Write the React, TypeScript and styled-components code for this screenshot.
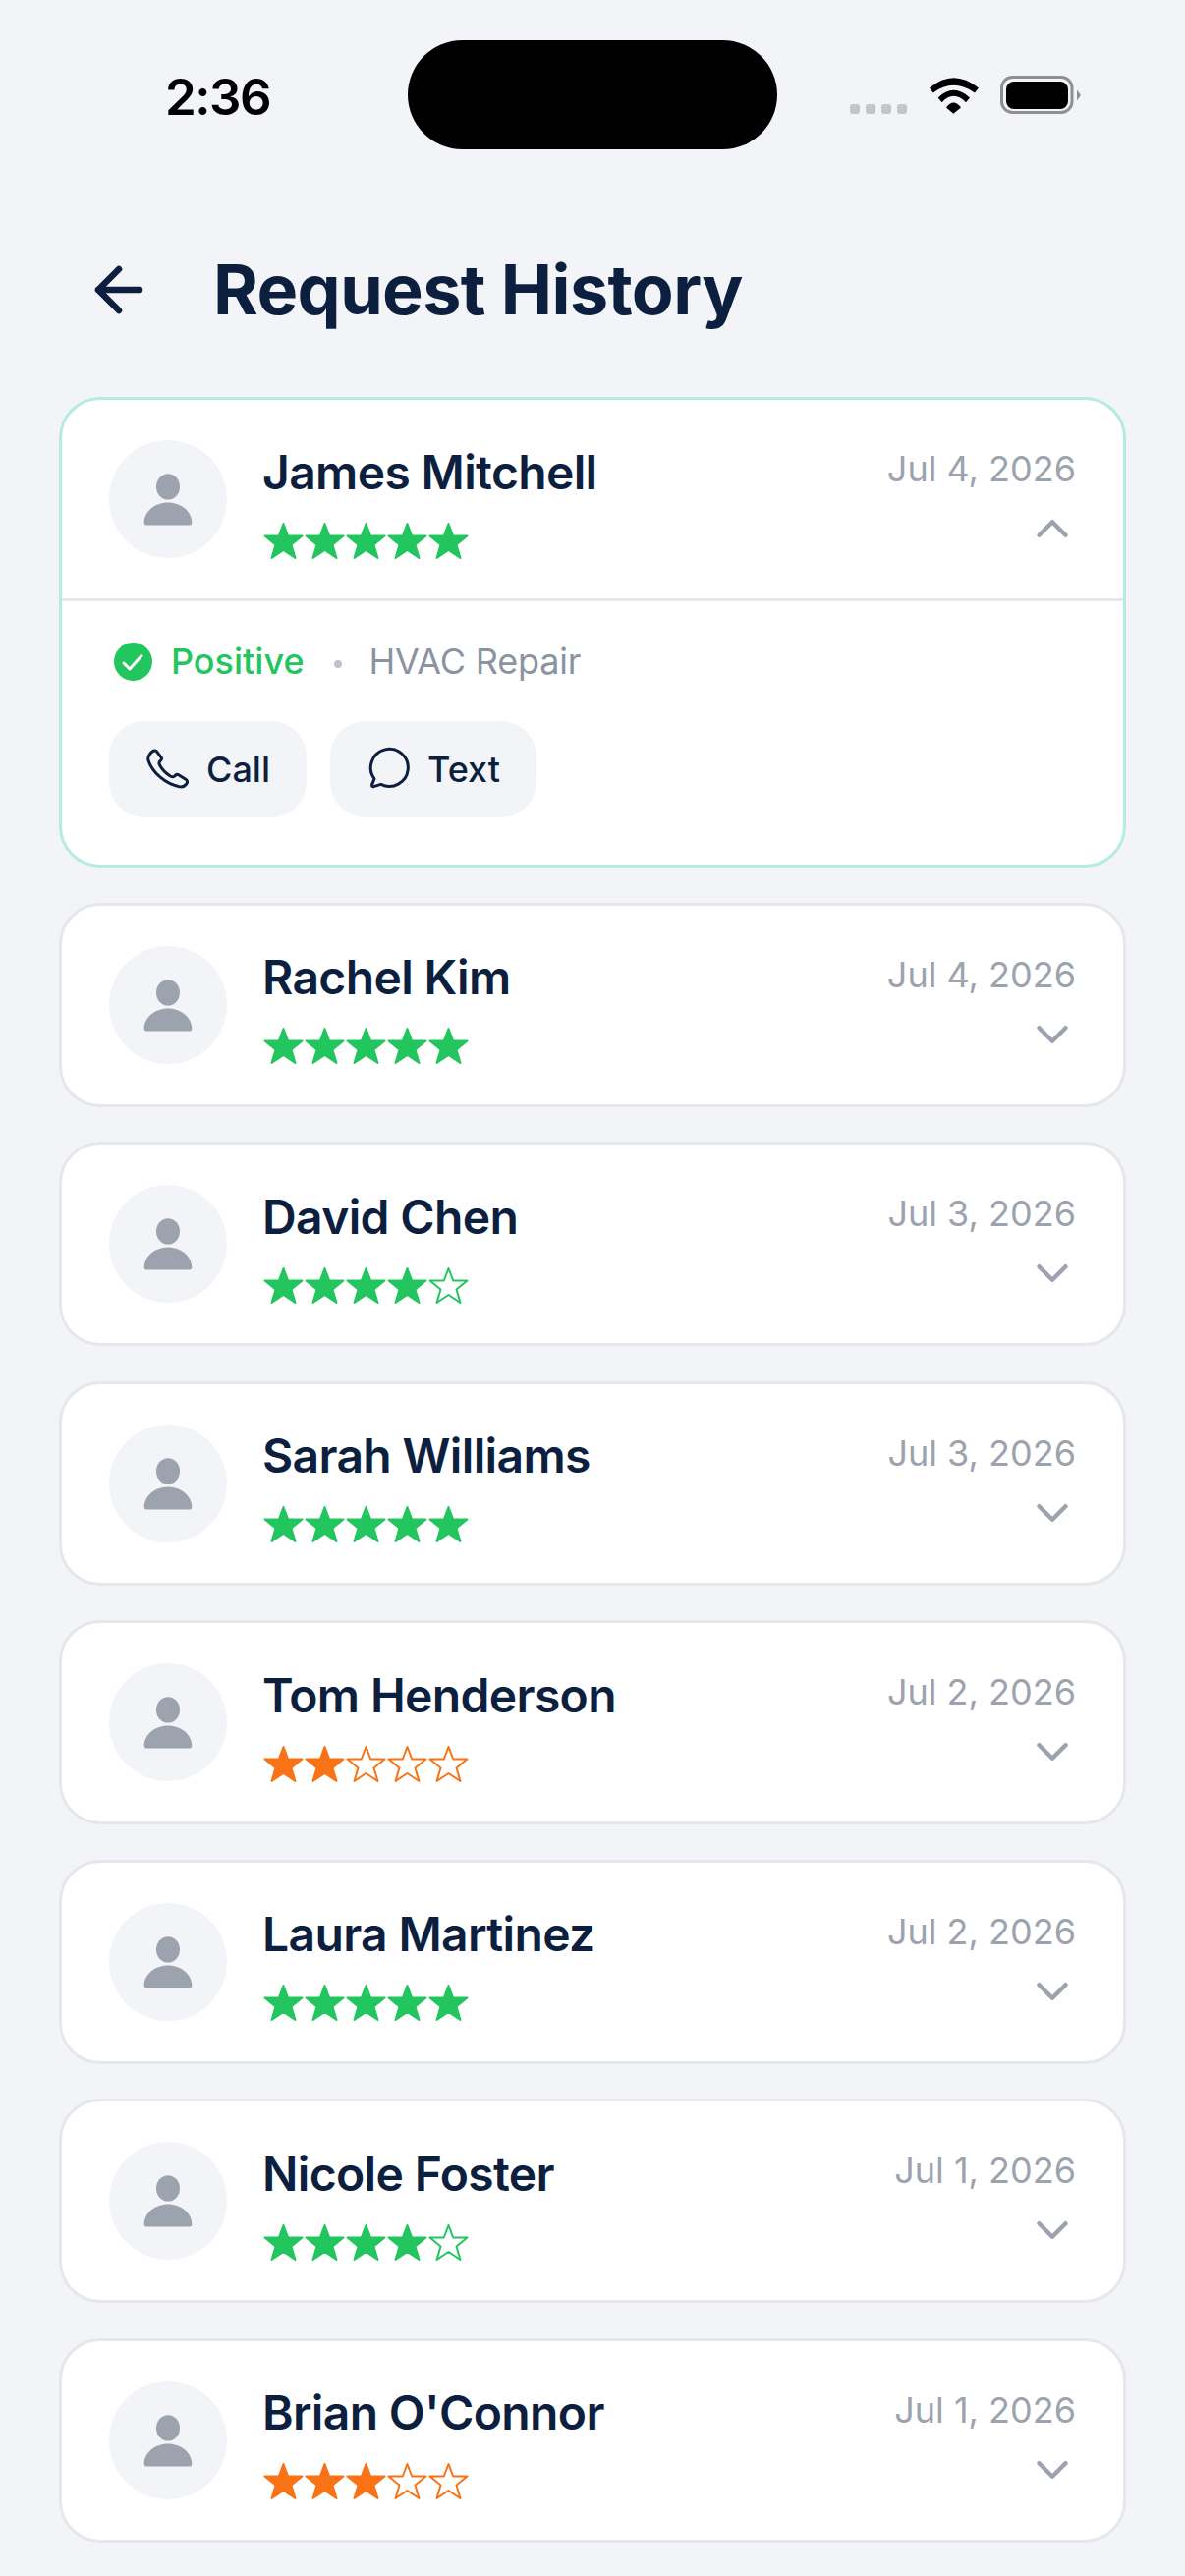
import React from "react";
import styled, { createGlobalStyle } from "styled-components";

const Global = createGlobalStyle`
  html, body { margin: 0; padding: 0; background: #f3f4f8; }
  body { font-family: Inter, "Liberation Sans", sans-serif; color: #0f1f3d; }
`;

const Page = styled.div`
  width: 1206px;
  height: 2622px;
  background: #f3f4f8;
  overflow: hidden;
`;

const StatusBar = styled.div`
  height: 152px;
  padding-top: 41px;
  box-sizing: border-box;
  display: grid;
  grid-template-columns: 415px 376px 1fr;
`;

const Time = styled.div`
  padding: 32px 0 0 168px;
  font-size: 51px;
  line-height: 52px;
  font-weight: 600;
  letter-spacing: -1.5px;
  color: #000;
`;

const Island = styled.div`
  height: 111px;
  border-radius: 56px;
  background: #000;
`;

const StatusIcons = styled.div`
  display: flex;
  align-items: flex-start;
  padding: 36px 0 0 74px;
`;

const Dots = styled.div`
  display: flex;
  gap: 6px;
  margin-top: 29px;
  width: 81px;
`;

const Dot = styled.span`
  width: 10px;
  height: 10px;
  border-radius: 3px;
  background: #c4c5c8;
`;

const WifiIcon = styled.svg`
  margin-top: 2px;
`;

const BatteryIcon = styled.svg`
  margin-left: 22px;
`;

const Header = styled.div`
  display: flex;
  align-items: center;
  height: 100px;
  margin-top: 93px;
  padding-left: 85px;
  gap: 60px;
`;

const Title = styled.h1`
  margin: 0;
  font-size: 70px;
  line-height: 84px;
  font-weight: 700;
  letter-spacing: -0.6px;
  color: #0d1f3f;
`;

const List = styled.div`
  display: flex;
  flex-direction: column;
  gap: 35.5px;
  margin-top: 59px;
  padding: 0 60px;
`;

const Card = styled.div<{ $open?: boolean }>`
  background: #fff;
  border: 3px solid ${(p) => (p.$open ? "#b5ece2" : "#e5e7eb")};
  border-radius: 42px;
  overflow: hidden;
`;

const Row = styled.div`
  display: flex;
  align-items: center;
  height: 202px;
  padding: 0 48px;
`;

const Avatar = styled.div`
  width: 120px;
  height: 120px;
  border-radius: 50%;
  background: #f3f4f8;
  display: flex;
  align-items: center;
  justify-content: center;
  flex: none;
`;

const Info = styled.div`
  margin-left: 36px;
  padding-top: 6px;
  flex: 1;
  display: flex;
  flex-direction: column;
  gap: 21px;
`;

const Name = styled.div`
  font-size: 48px;
  line-height: 58px;
  font-weight: 600;
  letter-spacing: -0.65px;
  color: #0d1f3f;
`;

const Stars = styled.div`
  display: flex;
  margin-left: 1px;
`;

const StarIcon = styled.svg`
  display: block;
`;

const Side = styled.div`
  display: flex;
  flex-direction: column;
  align-items: flex-end;
  gap: 12px;
  padding-top: 4px;
`;

const DateText = styled.div`
  font-size: 36px;
  line-height: 44px;
  color: #9ca3af;
`;

const ChevronWrap = styled.div`
  width: 54px;
  height: 54px;
  margin-right: -3px;
`;

const Details = styled.div`
  border-top: 3px solid #e5e7eb;
  padding: 36px 48px 48px;
`;

const Meta = styled.div`
  display: flex;
  align-items: center;
  height: 50px;
`;

const CheckIcon = styled.svg`
  margin-left: 5px;
`;

const Positive = styled.span`
  margin-left: 19px;
  font-size: 36px;
  font-weight: 500;
  color: #22c55e;
`;

const Sep = styled.span`
  width: 8px;
  height: 8px;
  border-radius: 50%;
  background: #bcc1ca;
  margin: 6px 28px 0 30px;
`;

const Service = styled.span`
  font-size: 36px;
  letter-spacing: -0.2px;
  color: #8b93a3;
`;

const Actions = styled.div`
  display: flex;
  gap: 24px;
  margin-top: 36px;
`;

const ActionButton = styled.div`
  display: flex;
  align-items: center;
  gap: 15px;
  height: 98px;
  padding: 0 37px 0 36px;
  border-radius: 36px;
  background: #f3f4f8;
  font-size: 36px;
  font-weight: 500;
  color: #0d1f3f;
`;

const Person = () => (
  <svg width="72" height="72" viewBox="0 0 24 24" fill="#9ca3af">
    <ellipse cx="12" cy="7.8" rx="4" ry="4.4" />
    <path d="M3.900 20.100c0-3.800 3.600-6.900 8.100-6.900s8.100 3.100 8.100 6.900c0 .4-.3.7-.7.7H4.600c-.4 0-.7-.3-.7-.7z" />
  </svg>
);

const STAR = "M19.500 1L24.200 13.500H38.500L27.500 22.500L31.500 36L19.500 28L7.500 36L11.500 22.500L.5 13.500H14.800z";

const Star = ({ filled, color }: { filled: boolean; color: string }) => (
  <StarIcon width="42" height="40" viewBox="-1 -1 42 40">
    <path d={STAR} fill={filled ? color : "none"} stroke={color} strokeWidth="2" strokeLinejoin="round" />
  </StarIcon>
);

const Rating = ({ value }: { value: number }) => {
  const color = value >= 4 ? "#22c55e" : "#f97316";
  return (
    <Stars>
      {[1, 2, 3, 4, 5].map((n) => (
        <Star key={n} filled={n <= value} color={color} />
      ))}
    </Stars>
  );
};

const Chevron = ({ up }: { up?: boolean }) => (
  <ChevronWrap>
    <svg width="54" height="54" viewBox="0 0 24 24" fill="none" stroke="#9ca3af" strokeWidth="2" strokeLinecap="round" strokeLinejoin="round">
      <path d={up ? "M6 15l6-6 6 6" : "M6 9l6 6 6-6"} />
    </svg>
  </ChevronWrap>
);

const people = [
  { name: "James Mitchell", date: "Jul 4, 2026", rating: 5, open: true },
  { name: "Rachel Kim", date: "Jul 4, 2026", rating: 5 },
  { name: "David Chen", date: "Jul 3, 2026", rating: 4 },
  { name: "Sarah Williams", date: "Jul 3, 2026", rating: 5 },
  { name: "Tom Henderson", date: "Jul 2, 2026", rating: 2 },
  { name: "Laura Martinez", date: "Jul 2, 2026", rating: 5 },
  { name: "Nicole Foster", date: "Jul 1, 2026", rating: 4 },
  { name: "Brian O'Connor", date: "Jul 1, 2026", rating: 3 },
];

export default function App() {
  return (
    <Page>
      <Global />
      <StatusBar>
        <Time>2:36</Time>
        <Island />
        <StatusIcons>
          <Dots>
            <Dot /><Dot /><Dot /><Dot />
          </Dots>
          <WifiIcon width="50" height="37" viewBox="287 57 150 110">
            <path d="M287 88Q360 26 437 88L425 103Q360 57 298 103Z" fill="#000" />
            <path d="M313 118Q360 72 410 118L398 132Q360 94 325 132Z" fill="#000" />
            <path d="M338 148Q360 118 383 148L360 167Z" fill="#000" />
          </WifiIcon>
          <BatteryIcon width="82" height="40" viewBox="0 0 82 40">
            <rect x="1.500" y="1.500" width="71.500" height="36" rx="11" fill="none" stroke="#8e8e93" strokeWidth="3" />
            <rect x="6" y="6" width="63" height="28" rx="8" fill="#000" />
            <path d="M78 14.500l4 5.500-4 5.500z" fill="#8e8e93" />
          </BatteryIcon>
        </StatusIcons>
      </StatusBar>
      <Header>
        <svg width="72" height="72" viewBox="0 0 24 24" fill="none" stroke="#0d1f3f" strokeWidth="2.200" strokeLinecap="round" strokeLinejoin="round">
          <path d="M19 12H5M12 19l-7-7 7-7" />
        </svg>
        <Title>Request History</Title>
      </Header>
      <List>
        {people.map((p) => (
          <Card key={p.name} $open={p.open}>
            <Row>
              <Avatar><Person /></Avatar>
              <Info>
                <Name>{p.name}</Name>
                <Rating value={p.rating} />
              </Info>
              <Side>
                <DateText>{p.date}</DateText>
                <Chevron up={p.open} />
              </Side>
            </Row>
            {p.open && (
              <Details>
                <Meta>
                  <CheckIcon width="39" height="39" viewBox="0 0 39 39">
                    <circle cx="19.500" cy="19.500" r="19.500" fill="#22c55e" />
                    <path d="M10 21l6 6 12-13.500" fill="none" stroke="#fff" strokeWidth="3" strokeLinecap="round" strokeLinejoin="round" />
                  </CheckIcon>
                  <Positive>Positive</Positive>
                  <Sep />
                  <Service>HVAC Repair</Service>
                </Meta>
                <Actions>
                  <ActionButton>
                    <svg width="48" height="48" viewBox="6 3 144 144" fill="none" stroke="#0d1f3f" strokeWidth="9" strokeLinecap="round" strokeLinejoin="round">
                      <path d="M22 30C26 22 36 14 43 20L58 40C60 44 58 47 54 50C50 54 50 58 53 63C60 76 72 88 85 96C90 99 95 99 98 96C102 91 106 90 110 92L132 106C138 110 138 116 134 120C128 128 120 130 112 128C70 120 30 85 18 48C16 40 18 35 22 30Z" />
                    </svg>
                    Call
                  </ActionButton>
                  <ActionButton>
                    <svg width="48" height="48" viewBox="3 3 144 144" fill="none" stroke="#0d1f3f" strokeWidth="9" strokeLinecap="round" strokeLinejoin="round">
                      <path d="M30 104A57 57 0 1 1 50 121L28 128Q22 129 23 122Z" />
                    </svg>
                    Text
                  </ActionButton>
                </Actions>
              </Details>
            )}
          </Card>
        ))}
      </List>
    </Page>
  );
}
